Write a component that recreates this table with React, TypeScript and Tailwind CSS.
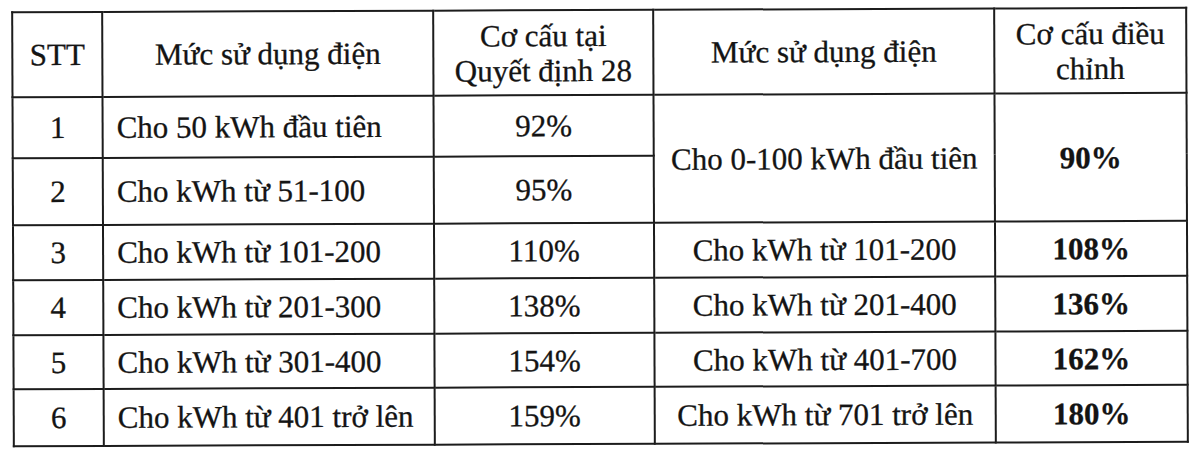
const ROWS = [
  { stt: "1", old: "Cho 50 kWh đầu tiên", oldPct: "92%", h: "h-[61px]" },
  { stt: "2", old: "Cho kWh từ 51-100", oldPct: "95%", h: "h-[67px]" },
  { stt: "3", old: "Cho kWh từ 101-200", oldPct: "110%", next: "Cho kWh từ 101-200", nextPct: "108%", h: "h-[55px]" },
  { stt: "4", old: "Cho kWh từ 201-300", oldPct: "138%", next: "Cho kWh từ 201-400", nextPct: "136%", h: "h-[55px]" },
  { stt: "5", old: "Cho kWh từ 301-400", oldPct: "154%", next: "Cho kWh từ 401-700", nextPct: "162%", h: "h-[54px]" },
  { stt: "6", old: "Cho kWh từ 401 trở lên", oldPct: "159%", next: "Cho kWh từ 701 trở lên", nextPct: "180%", h: "h-[57px]" },
];

const cell = "border-2 border-[#1c1c1c] p-0 align-middle";

export default function App() {
  return (
    <div className="w-[1200px] h-[449px] bg-white overflow-hidden font-['Liberation_Serif','Times_New_Roman',serif] text-[#141414]">
      <div className="pt-[9px] pl-[12px]">
        <table className="border-collapse table-fixed w-[1174px] text-[31px] leading-[35px] [-webkit-text-stroke:0.3px_#141414] rotate-[-0.22deg]">
          <colgroup>
            <col className="w-[90px]" />
            <col className="w-[331px]" />
            <col className="w-[220px]" />
            <col className="w-[341px]" />
            <col className="w-[192px]" />
          </colgroup>
          <thead>
            <tr className="h-[85px] text-center">
              <th className={`${cell} font-normal`}>STT</th>
              <th className={`${cell} font-normal`}>Mức sử dụng điện</th>
              <th className={`${cell} font-normal`}>
                Cơ cấu tại
                <br />
                Quyết định 28
              </th>
              <th className={`${cell} font-normal`}>Mức sử dụng điện</th>
              <th className={`${cell} font-normal`}>
                Cơ cấu điều
                <br />
                chỉnh
              </th>
            </tr>
          </thead>
          <tbody>
            {ROWS.map((r, i) => (
              <tr key={r.stt} className={r.h}>
                <td className={`${cell} text-center`}>{r.stt}</td>
                <td className={`${cell} pl-[13px] whitespace-nowrap`}>{r.old}</td>
                <td className={`${cell} text-center`}>{r.oldPct}</td>
                {i === 0 && (
                  <>
                    <td rowSpan={2} className={`${cell} text-center`}>
                      Cho 0-100 kWh đầu tiên
                    </td>
                    <td rowSpan={2} className={`${cell} text-center font-bold`}>
                      90%
                    </td>
                  </>
                )}
                {i > 1 && (
                  <>
                    <td className={`${cell} text-center whitespace-nowrap`}>{r.next}</td>
                    <td className={`${cell} text-center font-bold`}>{r.nextPct}</td>
                  </>
                )}
              </tr>
            ))}
          </tbody>
        </table>
      </div>
    </div>
  );
}
